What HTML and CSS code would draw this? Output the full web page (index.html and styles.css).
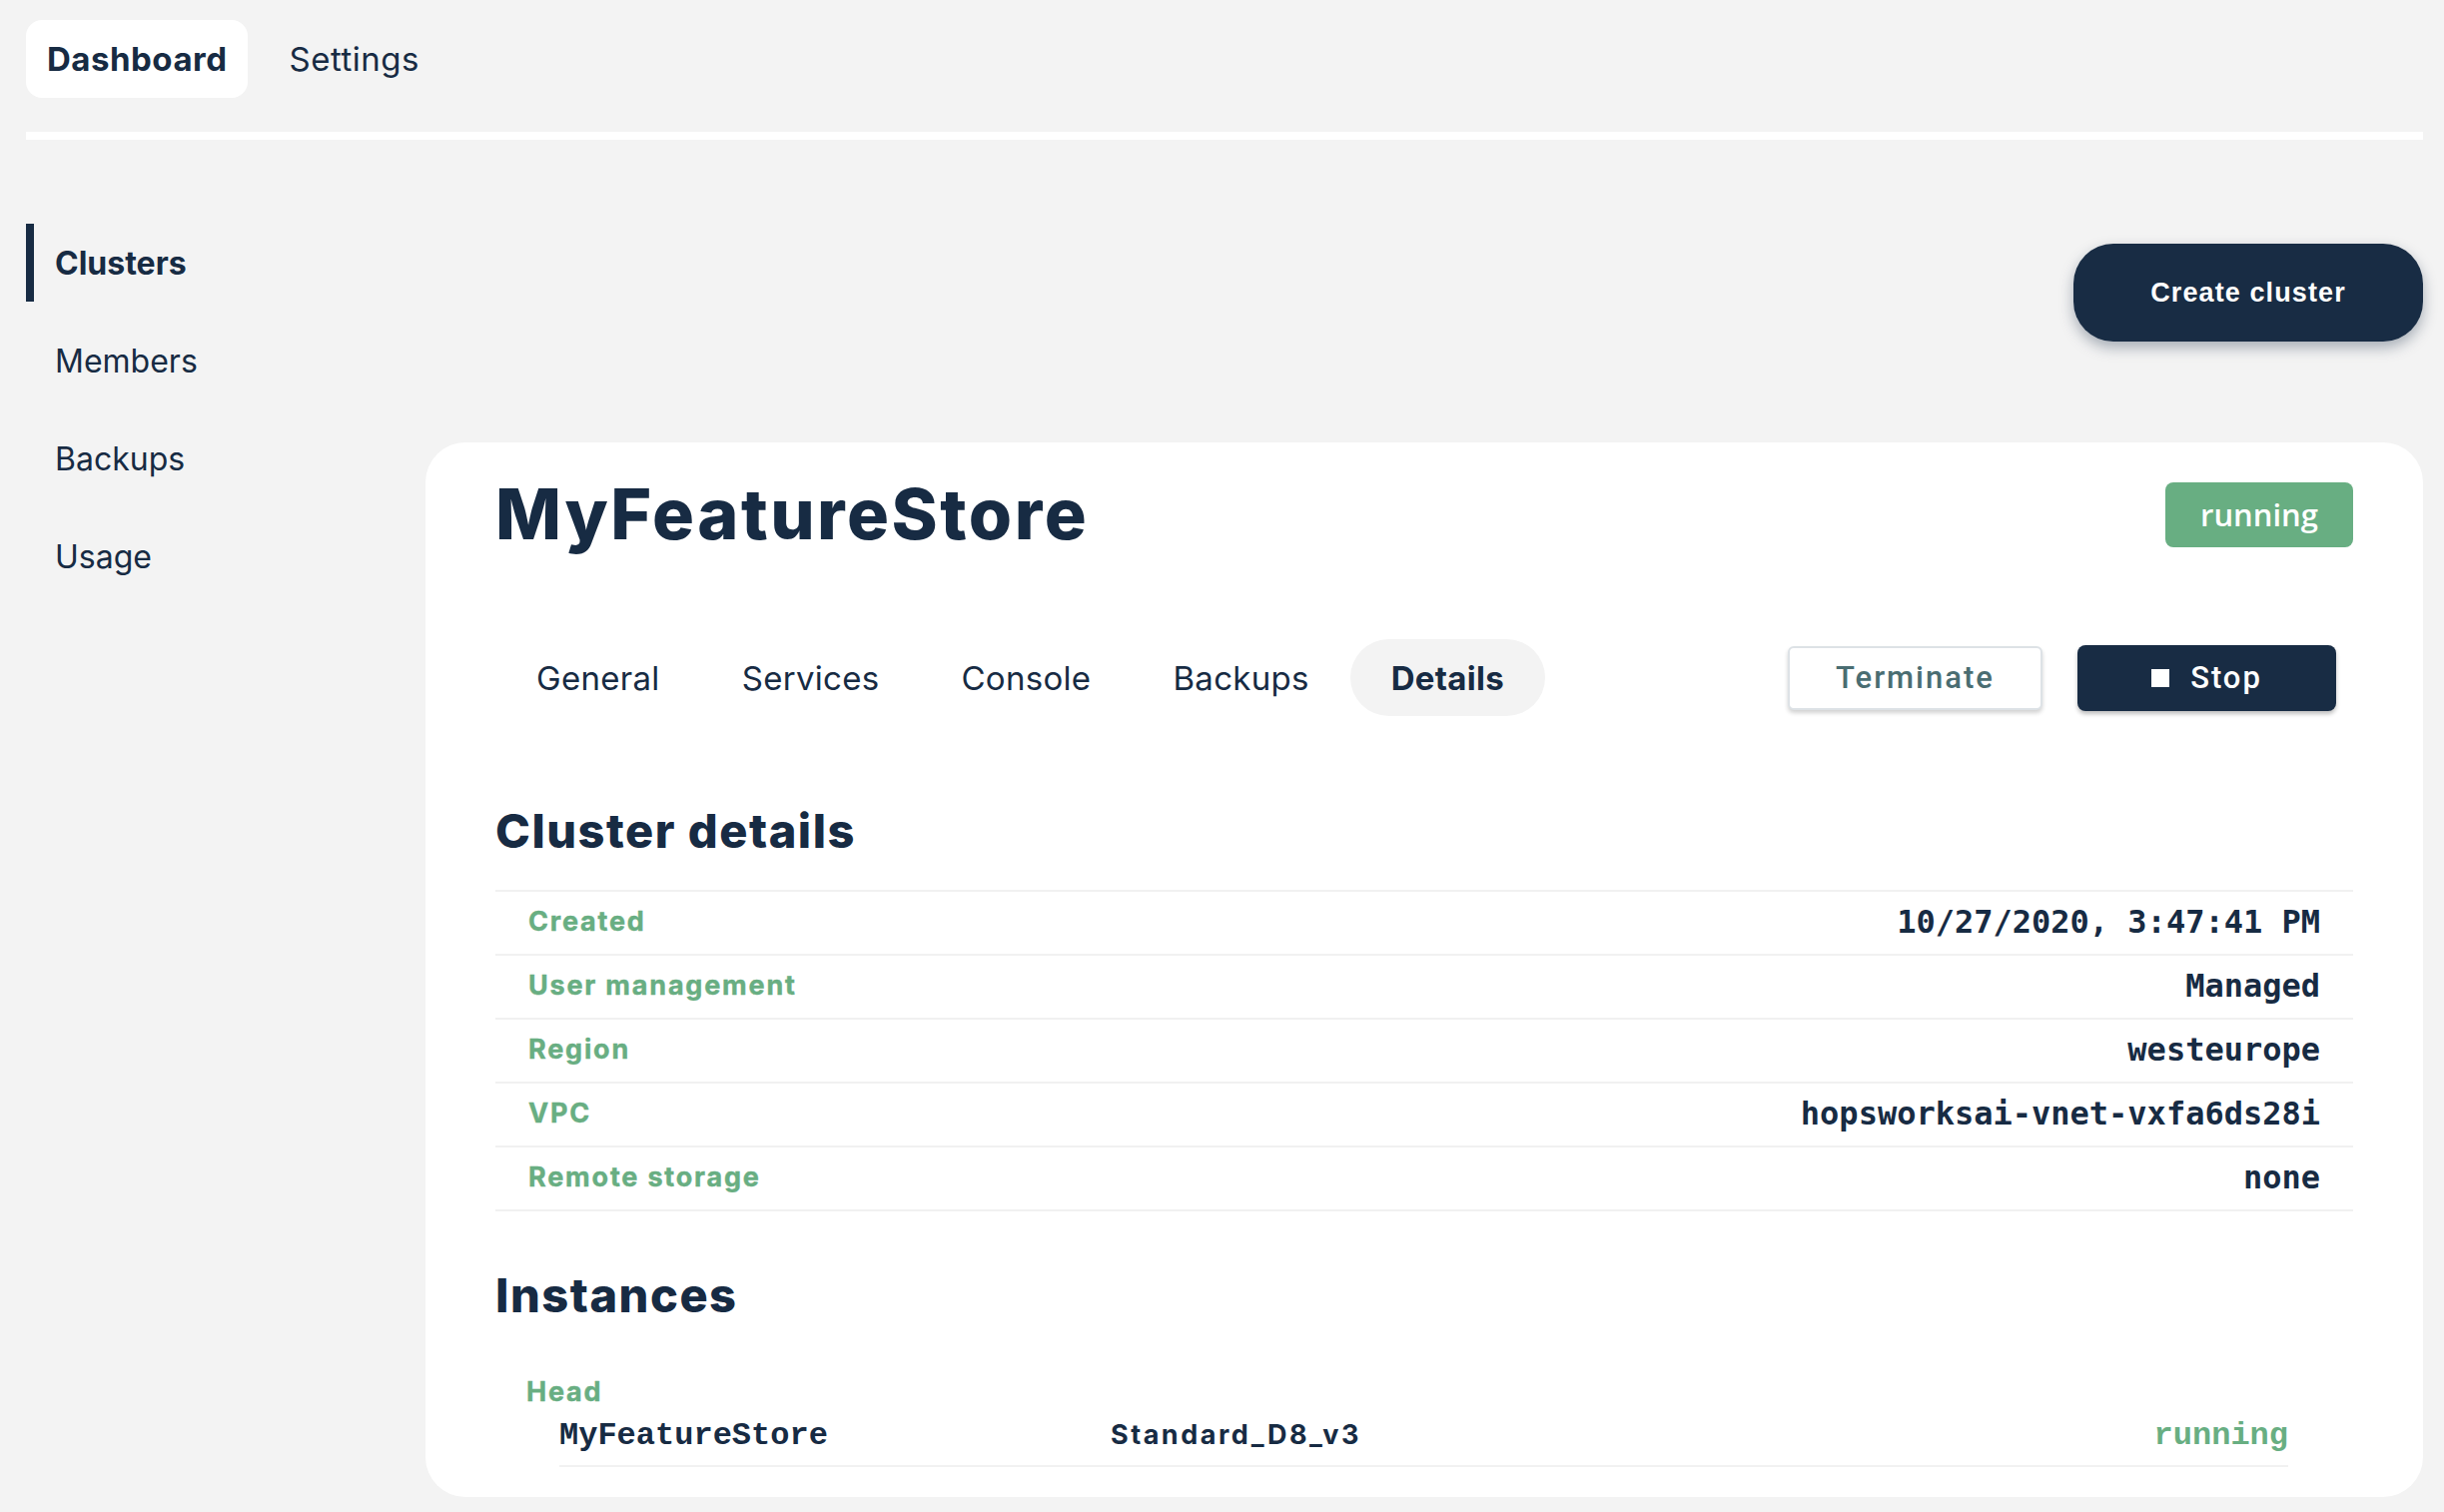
FILE: index.html
```html
<!DOCTYPE html>
<html lang="en">
<head>
<meta charset="utf-8">
<title>Clusters – MyFeatureStore</title>
<link rel="stylesheet" href="styles.css">
</head>
<body>
<div class="page">
  <header class="topnav">
    <a class="topnav-item active">Dashboard</a>
    <a class="topnav-item">Settings</a>
  </header>
  <div class="layout">
    <nav class="sidebar">
      <a class="side-item active">Clusters</a>
      <a class="side-item">Members</a>
      <a class="side-item">Backups</a>
      <a class="side-item">Usage</a>
    </nav>
    <main class="main">
      <div class="main-actions">
        <button class="btn-create">Create cluster</button>
      </div>
      <section class="card">
        <div class="card-header">
          <h1 class="cluster-name">MyFeatureStore</h1>
          <span class="badge">running</span>
        </div>
        <div class="tabs-row">
          <div class="tabs">
            <a class="tab">General</a>
            <a class="tab">Services</a>
            <a class="tab">Console</a>
            <a class="tab">Backups</a>
            <a class="tab active">Details</a>
          </div>
          <div class="actions">
            <button class="btn-terminate">Terminate</button>
            <button class="btn-stop"><span class="stop-icon"></span>Stop</button>
          </div>
        </div>
        <h2 class="section-title">Cluster details</h2>
        <div class="details">
          <div class="detail-row"><span class="detail-label">Created</span><span class="detail-value">10/27/2020, 3:47:41 PM</span></div>
          <div class="detail-row"><span class="detail-label">User management</span><span class="detail-value">Managed</span></div>
          <div class="detail-row"><span class="detail-label">Region</span><span class="detail-value">westeurope</span></div>
          <div class="detail-row"><span class="detail-label">VPC</span><span class="detail-value">hopsworksai-vnet-vxfa6ds28i</span></div>
          <div class="detail-row"><span class="detail-label">Remote storage</span><span class="detail-value">none</span></div>
        </div>
        <h2 class="section-title instances-title">Instances</h2>
        <div class="instances">
          <div class="instance-group-label">Head</div>
          <div class="instance-row">
            <span class="inst-name">MyFeatureStore</span>
            <span class="inst-type">Standard_D8_v3</span>
            <span class="inst-status">running</span>
          </div>
        </div>
      </section>
    </main>
  </div>
</div>
</body>
</html>
```

FILE: styles.css
```css
* { box-sizing: border-box; }

body {
  margin: 0;
  background: #f3f3f3;
  font-family: Inter, "Noto Sans", sans-serif;
  color: #172b43;
}

.page {
  padding: 20px 21px 0 26px;
}

/* top navigation */
.topnav {
  display: flex;
  gap: 20px;
  padding-bottom: 34px;
  border-bottom: 8px solid #ffffff;
}

.topnav-item {
  height: 78px;
  padding: 0 21px;
  display: flex;
  align-items: center;
  border-radius: 16px;
  font-size: 33px;
  letter-spacing: 0.5px;
  color: #172b43;
}

.topnav-item.active {
  background: #ffffff;
  font-weight: 700;
}

/* layout */
.layout {
  display: flex;
}

.sidebar {
  width: 400px;
  flex: none;
  padding-top: 84px;
  display: flex;
  flex-direction: column;
  gap: 20px;
}

.side-item {
  height: 78px;
  display: flex;
  align-items: center;
  border-left: 8px solid transparent;
  padding-left: 21px;
  font-size: 32px;
  color: #172b43;
}

.side-item.active {
  border-left-color: #172b43;
  font-weight: 700;
}

.main {
  flex: 1;
  display: flex;
  flex-direction: column;
}

.main-actions {
  display: flex;
  justify-content: flex-end;
  padding-top: 104px;
}

.btn-create {
  width: 350px;
  height: 98px;
  border: 0;
  border-radius: 40px;
  background: #182c44;
  color: #ffffff;
  font-family: "Liberation Sans", Arial, sans-serif;
  font-weight: 700;
  font-size: 27px;
  letter-spacing: 1.1px;
  box-shadow: 0 6px 14px rgba(24, 44, 68, 0.35);
}

/* card */
.card {
  margin-top: 101px;
  background: #ffffff;
  border-radius: 40px;
  padding: 37px 70px 30px 70px;
}

.card-header {
  display: flex;
  justify-content: space-between;
  align-items: center;
  height: 70px;
}

.cluster-name {
  margin: 0;
  font-size: 70px;
  line-height: 1;
  font-weight: 800;
  letter-spacing: 2.5px;
  color: #172b43;
}

.badge {
  height: 65px;
  padding: 0 35px;
  display: flex;
  align-items: center;
  border-radius: 8px;
  background: #68ae82;
  color: #ffffff;
  font-family: "Open Sans", sans-serif;
  font-weight: 600;
  font-size: 31px;
}

/* tabs */
.tabs-row {
  margin-top: 90px;
  display: flex;
  justify-content: space-between;
  align-items: center;
}

.tabs {
  display: flex;
}

.tab {
  height: 77px;
  padding: 0 41px;
  display: flex;
  align-items: center;
  border-radius: 39px;
  font-size: 33px;
  letter-spacing: 0.3px;
  color: #172b43;
}

.tab.active {
  background: #f3f3f3;
  font-weight: 700;
}

.actions {
  display: flex;
  align-items: center;
  gap: 35px;
  margin-right: 17px;
}

.btn-terminate {
  width: 255px;
  height: 64px;
  border: 2px solid #dde2e6;
  border-radius: 6px;
  background: #ffffff;
  color: #4a6d72;
  font-family: Roboto, sans-serif;
  font-weight: 500;
  font-size: 31px;
  letter-spacing: 2px;
  box-shadow: 0 3px 4px rgba(0, 0, 0, 0.18);
}

.btn-stop {
  width: 259px;
  height: 66px;
  border: 0;
  border-radius: 8px;
  background: #182c44;
  color: #ffffff;
  display: flex;
  align-items: center;
  justify-content: center;
  gap: 21px;
  font-family: Roboto, sans-serif;
  font-weight: 500;
  font-size: 31px;
  letter-spacing: 2px;
  box-shadow: 0 3px 4px rgba(0, 0, 0, 0.25);
}

.stop-icon {
  width: 18px;
  height: 18px;
  background: #ffffff;
}

/* sections */
.section-title {
  margin: 91px 0 0;
  font-size: 47px;
  line-height: 1;
  font-weight: 800;
  letter-spacing: 1.5px;
  color: #172b43;
}

.details {
  margin-top: 36px;
}

.detail-row {
  height: 64px;
  display: flex;
  justify-content: space-between;
  align-items: center;
  border-top: 2px solid #f1f1f1;
  padding: 0 33px 3px;
}

.detail-row:last-child {
  height: 66px;
  border-bottom: 2px solid #f1f1f1;
}

.detail-label {
  color: #68ae82;
  font-weight: 700;
  font-size: 27px;
  letter-spacing: 1.8px;
  -webkit-text-stroke: 0.4px #68ae82;
}

.detail-value {
  font-family: "DejaVu Sans Mono", monospace;
  font-weight: 700;
  font-size: 32px;
  color: #172b43;
}

.instances-title {
  margin-top: 60px;
}

.instances {
  margin-top: 60px;
  padding: 0 65px 0 31px;
}

.instance-group-label {
  color: #68ae82;
  font-weight: 700;
  font-size: 27px;
  line-height: 1;
  letter-spacing: 1.8px;
  -webkit-text-stroke: 0.4px #68ae82;
}

.instance-row {
  margin: 15px 0 0 33px;
  display: grid;
  grid-template-columns: 552px 1fr auto;
  align-items: baseline;
  padding-bottom: 13px;
  border-bottom: 2px solid #f1f1f1;
  line-height: 1;
}

.inst-name {
  font-family: "Liberation Mono", monospace;
  font-weight: 700;
  font-size: 32px;
}

.inst-type {
  font-weight: 700;
  font-size: 27px;
  letter-spacing: 2.5px;
}

.inst-status {
  font-family: "Liberation Mono", monospace;
  font-weight: 700;
  font-size: 32px;
  color: #68ae82;
}
```
